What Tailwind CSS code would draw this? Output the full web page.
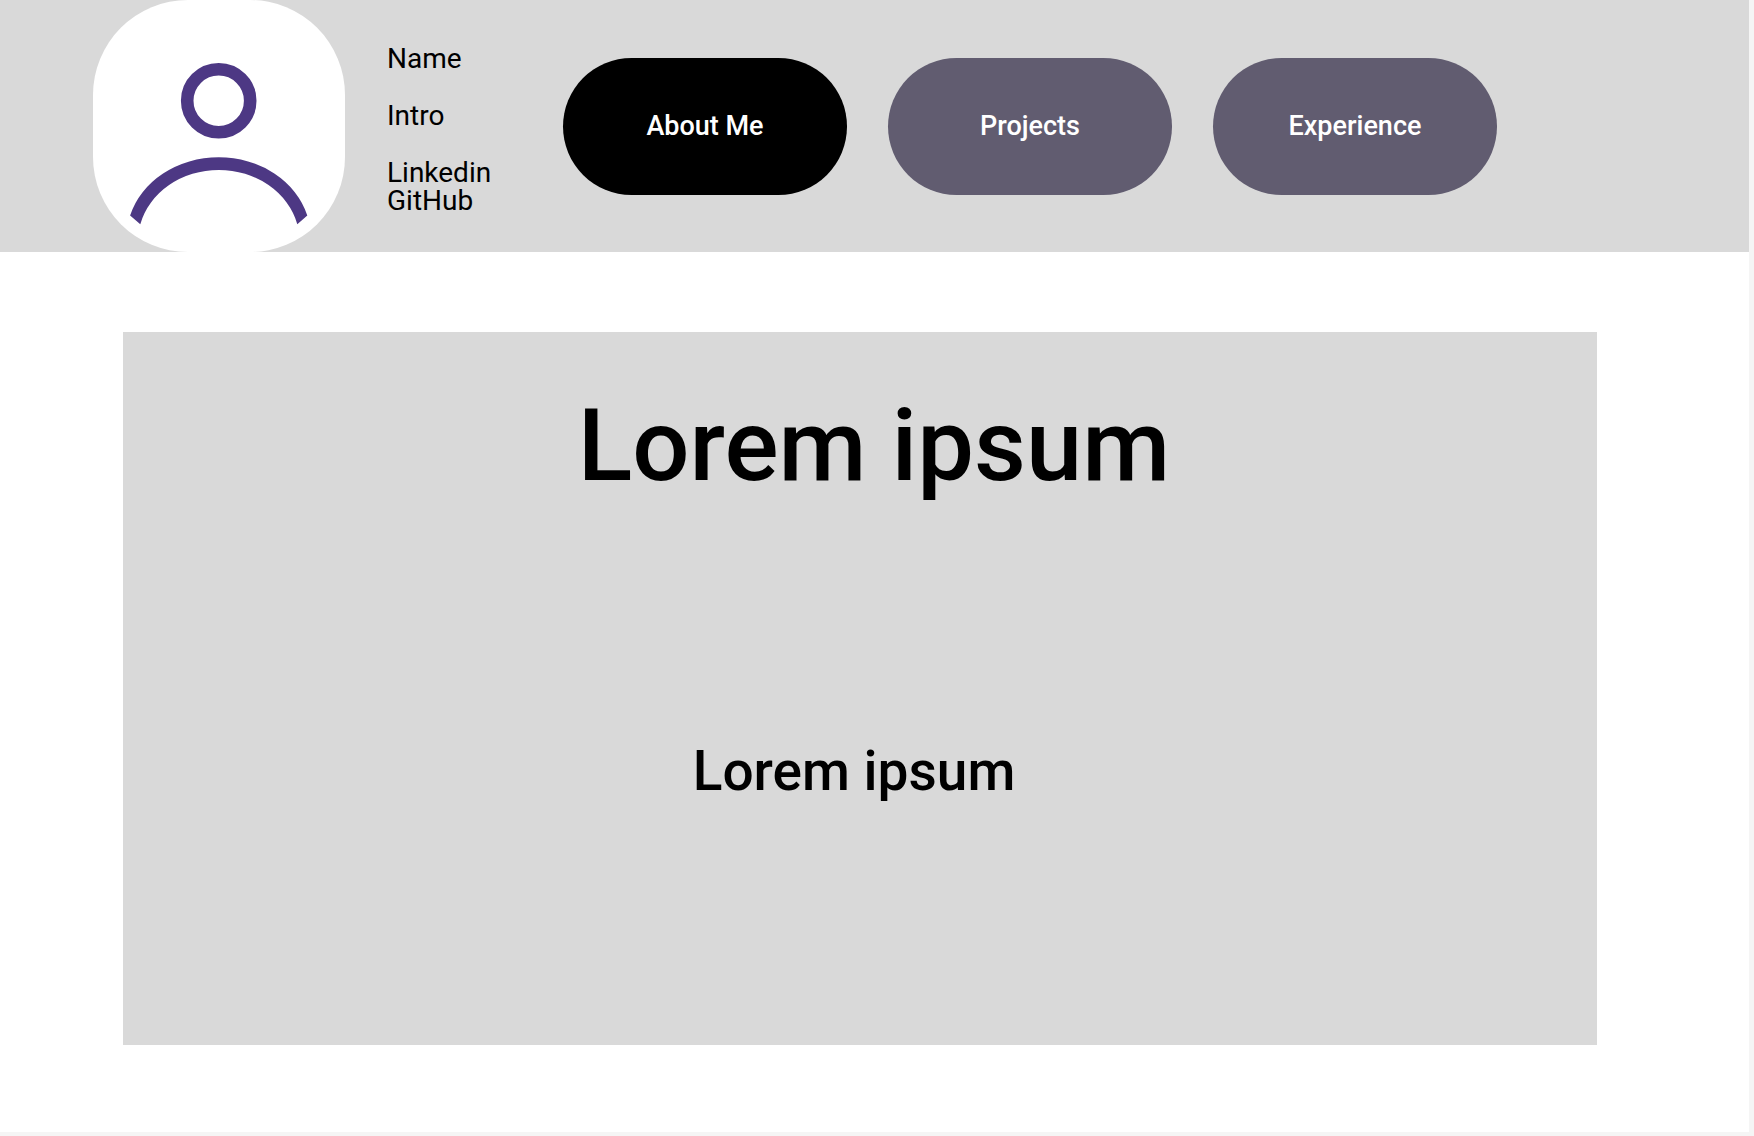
<!DOCTYPE html>
<html lang="en">
<head>
<meta charset="utf-8">
<meta name="viewport" content="width=device-width, initial-scale=1">
<title>Portfolio</title>
<script src="https://cdn.jsdelivr.net/npm/@tailwindcss/browser@4"></script>
</head>
<body class="flex min-h-screen bg-[#f5f5f5] pr-[5px] pb-1 font-['Roboto',sans-serif] text-black">
  <div class="flex grow flex-col bg-white">
    <header class="flex items-center bg-[#d9d9d9] pl-[93px]">
      <div class="size-[252px] shrink-0 rounded-[95px] bg-white">
        <svg viewBox="0 0 252 252" class="size-full" fill="none" role="img" aria-label="Profile picture">
          <circle cx="125.7" cy="100.7" r="31.5" stroke="#4d3884" stroke-width="12.6"/>
          <path fill="#4d3884" d="M37.1 215.5A92 79.7 0 0 1 214.3 215.5L204.3 224.2A81 72 0 0 0 47.3 224.2Z"/>
        </svg>
      </div>
      <div class="ml-[42px] flex w-[176px] shrink-0 flex-col gap-[29px] pt-2 text-[28px] leading-[28px]">
        <p>Name</p>
        <p>Intro</p>
        <p class="flex flex-col items-start"><a href="#linkedin">Linkedin</a><a href="#github">GitHub</a></p>
      </div>
      <nav class="flex gap-[41px] text-[27px] leading-9 font-medium text-white">
        <button type="button" class="h-[137px] w-[284px] rounded-full bg-black">About Me</button>
        <button type="button" class="h-[137px] w-[284px] rounded-full bg-[#615c70]">Projects</button>
        <button type="button" class="h-[137px] w-[284px] rounded-full bg-[#615c70]">Experience</button>
      </nav>
    </header>
    <main class="mt-20 mr-[152px] mb-[87px] ml-[123px] flex grow flex-col items-center bg-[#d9d9d9] pt-14 font-medium">
      <h1 class="pl-7 text-[101px] leading-[116px]">Lorem ipsum</h1>
      <p class="mt-[235px] pr-3 text-[55px] leading-[64px]">Lorem ipsum</p>
    </main>
  </div>
</body>
</html>
